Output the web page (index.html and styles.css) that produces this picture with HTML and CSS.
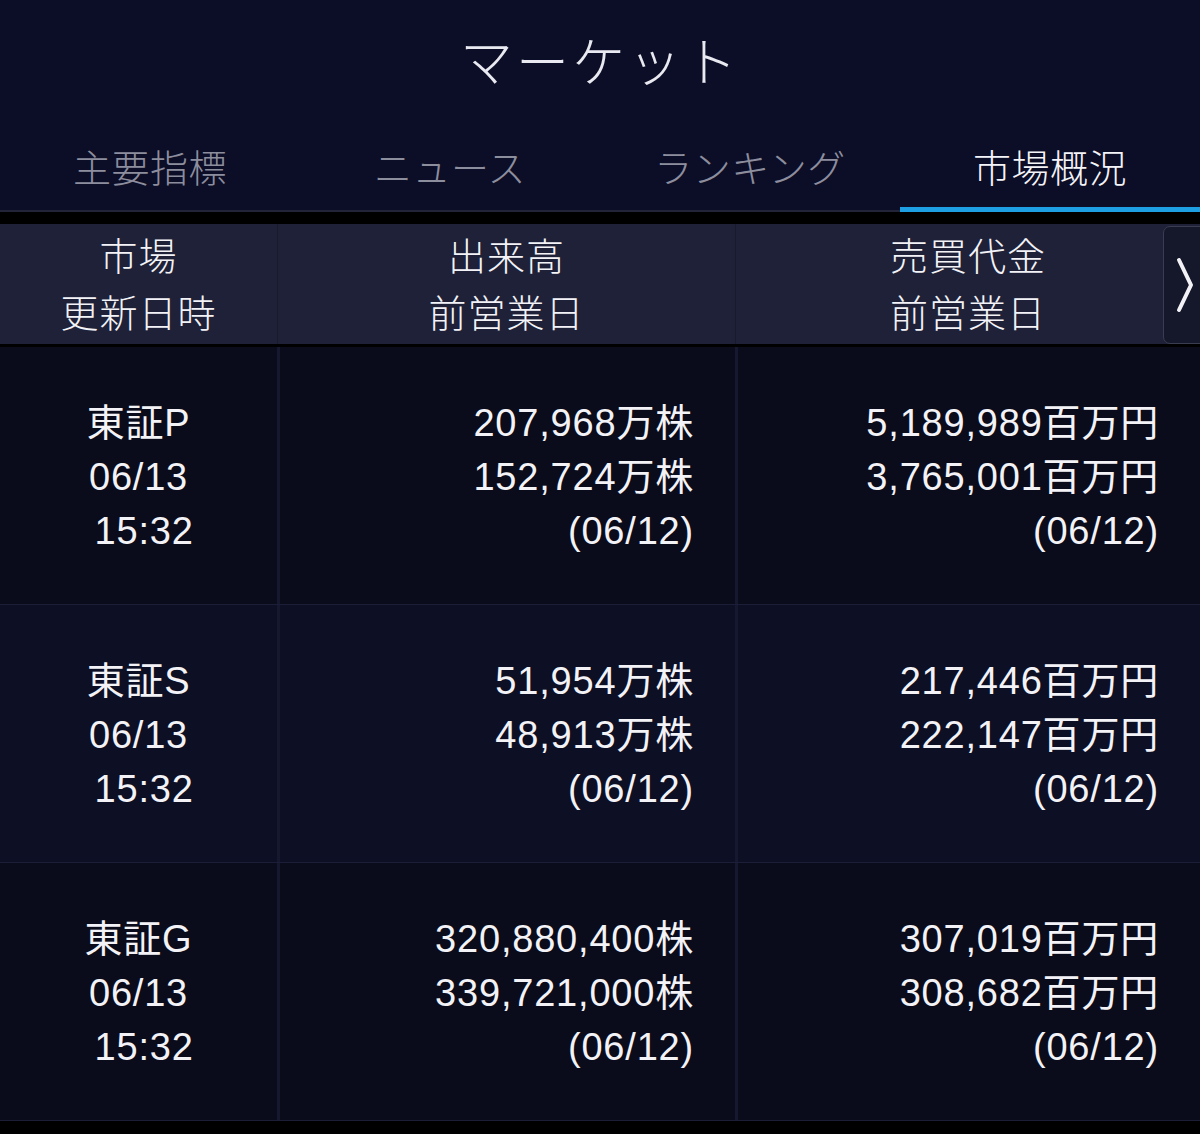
FILE: index.html
```html
<!DOCTYPE html>
<html lang="ja">
<head>
<meta charset="utf-8">
<title>マーケット</title>
<link rel="stylesheet" href="styles.css">
</head>
<body>
<div class="top">
  <h1 class="title">マーケット</h1>
  <nav class="tabs">
    <div class="tab">主要指標</div>
    <div class="tab">ニュース</div>
    <div class="tab">ランキング</div>
    <div class="tab active">市場概況</div>
  </nav>
</div>
<div class="table">
  <div class="thead">
    <div class="hcell"><span>市場</span><span>更新日時</span></div>
    <div class="hcell"><span>出来高</span><span>前営業日</span></div>
    <div class="hcell"><span>売買代金</span><span>前営業日</span></div>
    <div class="next">
      <svg width="18" height="56" viewBox="0 0 18 56"><polyline points="3,3 15,28 3,53" fill="none" stroke="#f2f2f6" stroke-width="4" stroke-linecap="round" stroke-linejoin="round"/></svg>
    </div>
  </div>
  <div class="row">
    <div class="cell market"><span>東証P</span><span>06/13</span><span> 15:32</span></div>
    <div class="cell num"><span>207,968万株</span><span>152,724万株</span><span>(06/12)</span></div>
    <div class="cell num"><span>5,189,989百万円</span><span>3,765,001百万円</span><span>(06/12)</span></div>
  </div>
  <div class="row alt">
    <div class="cell market"><span>東証S</span><span>06/13</span><span> 15:32</span></div>
    <div class="cell num"><span>51,954万株</span><span>48,913万株</span><span>(06/12)</span></div>
    <div class="cell num"><span>217,446百万円</span><span>222,147百万円</span><span>(06/12)</span></div>
  </div>
  <div class="row">
    <div class="cell market"><span>東証G</span><span>06/13</span><span> 15:32</span></div>
    <div class="cell num"><span>320,880,400株</span><span>339,721,000株</span><span>(06/12)</span></div>
    <div class="cell num"><span>307,019百万円</span><span>308,682百万円</span><span>(06/12)</span></div>
  </div>
</div>
</body>
</html>
```
FILE: styles.css
```css
* { box-sizing: border-box; }
html, body { margin: 0; padding: 0; }
body {
  background: #000;
  width: 1200px;
  height: 1134px;
  overflow: hidden;
  font-family: "Liberation Sans", "Noto Sans CJK JP", sans-serif;
  color: #f3f3f7;
}
.top {
  background: #0c0d26;
}
.title {
  margin: 0;
  height: 120px;
  display: flex;
  align-items: center;
  justify-content: center;
  font-size: 53px;
  font-weight: 300;
  letter-spacing: 3px;
  color: #e9e9f1;
  padding-bottom: 2px;
}
.tabs {
  display: grid;
  grid-template-columns: repeat(4, 1fr);
  height: 92px;
}
.tab {
  display: flex;
  justify-content: center;
  align-items: flex-start;
  padding-top: 27px;
  font-size: 38px;
  font-weight: 300;
  line-height: 44px;
  letter-spacing: 0.5px;
  color: #8c8e9e;
  border-bottom: 2px solid #22243a;
}
.tab.active {
  color: #f4f4f8;
  border-bottom: 5px solid #1e9fe3;
}
.table {
  margin-top: 12px;
}
.thead {
  position: relative;
  display: grid;
  grid-template-columns: 277px 458px 1fr;
  height: 120px;
  background: #1e2138;
  border-bottom: 3px solid #000;
  box-sizing: content-box;
}
.hcell {
  display: flex;
  flex-direction: column;
  align-items: center;
  justify-content: center;
  font-size: 38px;
  font-weight: 300;
  line-height: 57px;
  letter-spacing: 1px;
  padding-top: 3px;
  border-left: 1px solid #181a2e;
}
.hcell:first-child { border-left: none; }
.next {
  position: absolute;
  right: -8px;
  top: 2px;
  width: 45px;
  height: 118px;
  background: #15172a;
  border: 1px solid #3a3d52;
  border-radius: 7px;
  display: flex;
  align-items: center;
  padding-left: 12px;
}
.row {
  display: grid;
  grid-template-columns: 277px 458px 1fr;
  height: 258px;
  background: #0a0b1b;
  border-bottom: 1px solid #1c1e38;
}
.row.alt { background: #0d0f24; }
.cell {
  display: flex;
  flex-direction: column;
  justify-content: center;
  font-size: 38px;
  line-height: 54px;
  letter-spacing: 0.8px;
  white-space: pre;
  padding-top: 3px;
  border-left: 3px solid #161830;
}
.cell.market {
  align-items: center;
  border-left: none;
}
.cell.num {
  align-items: flex-end;
  padding-right: 41px;
}
```
